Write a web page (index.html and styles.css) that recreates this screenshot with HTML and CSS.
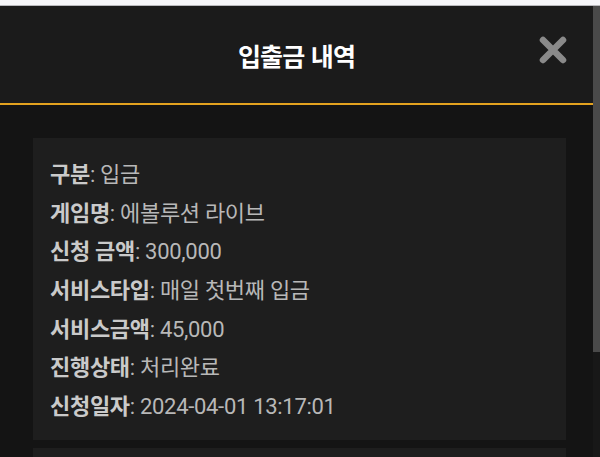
FILE: index.html
```html
<!DOCTYPE html>
<html lang="ko">
<head>
    <meta charset="UTF-8">
    <meta name="viewport" content="width=device-width, initial-scale=1.0">
    <title>입출금 내역</title>
    <link rel="stylesheet" href="styles.css">
</head>
<body>
    <div class="top-strip"></div>
    <div class="frame">
        <div class="modal">
            <div class="modal-header">
                <h2>입출금 내역</h2>
                <button class="close-btn" aria-label="닫기">
                    <svg width="30" height="30" viewBox="0 0 30 30">
                        <path d="M5 5 L25 25 M25 5 L5 25" stroke="#8a8a8a" stroke-width="6.5" stroke-linecap="round"/>
                    </svg>
                </button>
            </div>
            <div class="modal-body">
                <div class="history-card">
                    <div class="row"><strong>구분</strong>: 입금</div>
                    <div class="row"><strong>게임명</strong>: 에볼루션 라이브</div>
                    <div class="row"><strong>신청 금액</strong>: 300,000</div>
                    <div class="row"><strong>서비스타입</strong>: 매일 첫번째 입금</div>
                    <div class="row"><strong>서비스금액</strong>: 45,000</div>
                    <div class="row"><strong>진행상태</strong>: 처리완료</div>
                    <div class="row"><strong>신청일자</strong>: 2024-04-01 13:17:01</div>
                </div>
                <div class="history-card"></div>
            </div>
        </div>
        <div class="scrollbar">
            <div class="thumb"></div>
        </div>
    </div>
</body>
</html>
```

FILE: styles.css
```css
body {
    margin: 0;
    padding: 0;
    height: 457px;
    overflow: hidden;
    background-color: #141414;
    font-family: Roboto, "Noto Sans CJK KR", sans-serif;
}

.top-strip {
    height: 5px;
    background-color: #f6f6f9;
    border-bottom: 1px solid #b9b9bd;
}

.frame {
    display: flex;
    height: 451px;
    overflow: hidden;
}

.modal {
    flex: 1;
    display: flex;
    flex-direction: column;
    overflow: hidden;
}

.modal-header {
    flex-shrink: 0;
    height: 97px;
    background-color: #1b1b1b;
    border-bottom: 2px solid #e3a21f;
    display: flex;
    align-items: center;
    justify-content: center;
    position: relative;
}

.modal-header h2 {
    margin: 0;
    font-family: "Noto Sans CJK KR", sans-serif;
    font-size: 25px;
    font-weight: 700;
    color: #ffffff;
    letter-spacing: -0.8px;
}

.close-btn {
    position: absolute;
    left: 538px;
    top: 29px;
    background: none;
    border: none;
    padding: 0;
    width: 30px;
    height: 30px;
    cursor: pointer;
}

.modal-body {
    flex-shrink: 0;
    background-color: #141414;
    padding: 33px 27px 0 33px;
    display: flex;
    flex-direction: column;
    gap: 8px;
}

.history-card {
    flex-shrink: 0;
    background-color: #1e1e1e;
    padding: 18px 17px 13px;
    min-height: 30px;
}

.row {
    font-size: 22px;
    line-height: 38.7px;
    height: 38.7px;
    color: #b8b8b8;
    white-space: nowrap;
    letter-spacing: -0.3px;
}

.row strong {
    font-weight: 700;
    color: #cacaca;
}

.scrollbar {
    width: 7px;
    background-color: #181818;
}

.thumb {
    height: 346px;
    background-color: #4a4a4a;
}
```
